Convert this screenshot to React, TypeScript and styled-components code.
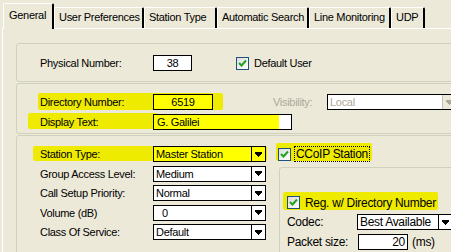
import React from 'react';
import styled, { createGlobalStyle } from 'styled-components';

const GlobalStyle = createGlobalStyle`
  body {
    margin: 0;
    background: #ece9d8;
    font-family: "Liberation Sans", Arial, sans-serif;
    font-size: 11px;
    letter-spacing: -0.3px;
    color: #000;
  }
`;

const Window = styled.div`
  width: 451px;
  height: 252px;
  overflow: hidden;
  padding-left: 2px;
  box-sizing: border-box;
`;

const TabStrip = styled.div`
  display: flex;
  align-items: flex-end;
  height: 28px;
  margin-left: 1px;
`;

const Tab = styled.div<{ active?: boolean; w: number }>`
  position: relative;
  box-sizing: border-box;
  width: ${(p) => p.w}px;
  height: ${(p) => (p.active ? '26px' : '21px')};
  margin-bottom: ${(p) => (p.active ? '-1px' : '0')};
  padding-left: ${(p) => (p.active ? 5 : 4)}px;
  border-top: 1px solid #fff;
  border-left: 1px solid #fff;
  border-right: 2px solid #000;
  border-top-left-radius: 2px;
  border-top-right-radius: 2px;
  background: #ece9d8;
  line-height: ${(p) => (p.active ? '22px' : '19px')};
  white-space: nowrap;
  z-index: ${(p) => (p.active ? 2 : 1)};
`;

const Page = styled.div`
  border-top: 1px solid #fff;
  border-left: 1px solid #fff;
  padding: 14px 0 0 13px;
`;

const Group = styled.div<{ gap?: number }>`
  position: relative;
  box-sizing: border-box;
  margin-right: -40px;
  margin-bottom: ${(p) => p.gap ?? 1}px;
  border: 1px solid #d0d0bf;
  border-radius: 3px;
  padding: 11px 0 0 23px;
`;

const Row = styled.div<{ h?: number }>`
  position: relative;
  display: flex;
  align-items: center;
  height: ${(p) => p.h ?? 16}px;
`;

const Stack = styled.div<{ gap: number; pb?: number }>`
  display: flex;
  flex-direction: column;
  gap: ${(p) => p.gap}px;
  padding-bottom: ${(p) => p.pb ?? 0}px;
`;

const Label = styled.span<{ w?: number; dim?: boolean }>`
  position: relative;
  width: ${(p) => (p.w ? `${p.w}px` : 'auto')};
  flex: none;
  color: ${(p) => (p.dim ? '#aca899' : '#000')};
  white-space: nowrap;
`;

const Marker = styled.span<{ l: number; t: number; w: number; h: number }>`
  position: absolute;
  left: ${(p) => p.l}px;
  top: ${(p) => p.t}px;
  width: ${(p) => p.w}px;
  height: ${(p) => p.h}px;
  background: #efeb00;
  border-radius: 2px;
`;

const TextBox = styled.div<{ w: number; align?: string; fill?: string }>`
  position: relative;
  box-sizing: border-box;
  width: ${(p) => p.w}px;
  height: 16px;
  flex: none;
  border: 1px solid #000;
  background: ${(p) => p.fill ?? '#fff'};
  text-align: ${(p) => p.align ?? 'left'};
  padding: 0 3px;
  line-height: 14px;
`;

const Combo = styled.div<{ w: number; fill?: string; disabled?: boolean }>`
  position: relative;
  box-sizing: border-box;
  display: flex;
  width: ${(p) => p.w}px;
  height: 16px;
  flex: none;
  border: 1px solid #000;
  background: ${(p) => p.fill ?? '#fff'};
  color: ${(p) => (p.disabled ? '#aca899' : '#000')};
  line-height: 14px;
`;

const ComboText = styled.span<{ indent?: number }>`
  flex: 1;
  padding-left: ${(p) => p.indent ?? 2}px;
  white-space: nowrap;
  overflow: hidden;
`;

const ComboButton = styled.span<{ disabled?: boolean }>`
  width: 13px;
  flex: none;
  display: flex;
  align-items: center;
  justify-content: center;
  border-left: 1px solid ${(p) => (p.disabled ? '#c0c0c0' : '#000')};
  background: ${(p) => (p.disabled ? '#ece9d8' : 'transparent')};
`;

const Check = styled.span`
  position: relative;
  box-sizing: border-box;
  width: 13px;
  height: 13px;
  flex: none;
  border: 1px solid #1c5180;
  background: linear-gradient(135deg, #dcdcd7, #fff);
  display: flex;
  align-items: center;
  justify-content: center;
`;

const CheckLabel = styled.span<{ focus?: boolean }>`
  position: relative;
  margin-left: 3px;
  padding: 0 1px;
  line-height: 14px;
  border: 1px dotted ${(p) => (p.focus ? '#000' : 'transparent')};
  white-space: nowrap;
`;

const Columns = styled.div`
  display: flex;
  align-items: flex-start;
`;

const RightCol = styled.div`
  margin-left: 12px;
  display: flex;
  flex-direction: column;
  font-size: 12px;
  letter-spacing: -0.3px;
`;

const InnerGroup = styled.div`
  box-sizing: border-box;
  margin: 5px 0 0 1px;
  width: 200px;
  height: 120px;
  border: 1px solid #d0d0bf;
  border-radius: 3px;
  padding: 26px 0 0 7px;
  display: flex;
  flex-direction: column;
`;

const Unit = styled.span`
  margin-left: 4px;
`;

const Arrow = ({ disabled }: { disabled?: boolean }) => (
  <svg width="7" height="5" viewBox="0 0 7 5">
    <path
      d="M0 0h7v2H0zM1 2h5v1H1zM2 3h3v1H2zM3 4h1v1H3z"
      fill={disabled ? '#aca899' : '#000'}
    />
  </svg>
);

const Tick = () => (
  <svg width="9" height="9" viewBox="0 0 9 9">
    <polyline points="1,4 3.5,6.5 8,1.5" fill="none" stroke="#21a121" strokeWidth="2" />
  </svg>
);

const Select = ({ w, value, fill, disabled, indent }: { w: number; value: string; fill?: string; disabled?: boolean; indent?: number }) => (
  <Combo w={w} fill={fill} disabled={disabled}>
    <ComboText indent={indent}>{value}</ComboText>
    <ComboButton disabled={disabled}>
      <Arrow disabled={disabled} />
    </ComboButton>
  </Combo>
);

const tabs = [
  { name: 'General', w: 51 },
  { name: 'User Preferences', w: 90 },
  { name: 'Station Type', w: 73 },
  { name: 'Automatic Search', w: 92 },
  { name: 'Line Monitoring', w: 82 },
  { name: 'UDP', w: 34 },
];

const stationRows = [
  { label: 'Group Access Level:', value: 'Medium' },
  { label: 'Call Setup Priority:', value: 'Normal' },
  { label: 'Volume (dB)', value: '0', indent: 8 },
  { label: 'Class Of Service:', value: 'Default' },
];

export default function App() {
  return (
    <Window>
      <GlobalStyle />
      <TabStrip>
        {tabs.map((t, i) => (
          <Tab key={t.name} w={t.w} active={i === 0}>
            {t.name}
          </Tab>
        ))}
      </TabStrip>
      <Page>
        <Group gap={1} style={{ height: 39 }}>
          <Row>
            <Label w={113}>Physical Number:</Label>
            <TextBox w={39} align="center">38</TextBox>
            <Check style={{ marginLeft: 44 }}>
              <Tick />
            </Check>
            <CheckLabel>Default User</CheckLabel>
          </Row>
        </Group>

        <Group gap={1} style={{ height: 51, paddingTop: 10 }}>
          <Stack gap={4}>
            <Row>
              <Marker l={-2} t={-1} w={185} h={17} />
              <Label w={113}>Directory Number:</Label>
              <TextBox w={60} align="center" fill="#ffff00">6519</TextBox>
              <Label dim style={{ marginLeft: 60 }} w={54}>Visibility:</Label>
              <Select w={130} value="Local" disabled />
            </Row>
            <Row>
              <Marker l={-12} t={-1} w={130} h={16} />
              <Label w={113}>Display Text:</Label>
              <TextBox w={139} fill="linear-gradient(to right, #ffff00 125px, #fff 125px)">
                G. Galilei
              </TextBox>
            </Row>
          </Stack>
        </Group>

        <Group style={{ height: 140, paddingTop: 10 }}>
          <Columns>
            <Stack gap={3.5}>
              <Row>
                <Marker l={-7} t={0} w={234} h={15} />
                <Label w={113}>Station Type:</Label>
                <Select w={113} value="Master Station" fill="#ffff00" />
              </Row>
              {stationRows.map((r) => (
                <Row key={r.label}>
                  <Label w={113}>{r.label}</Label>
                  <Select w={113} value={r.value} indent={r.indent} />
                </Row>
              ))}
            </Stack>
            <RightCol>
              <Row>
                <Marker l={-2} t={-3} w={96} h={18} />
                <Check>
                  <Tick />
                </Check>
                <CheckLabel focus>CCoIP Station</CheckLabel>
              </Row>
              <InnerGroup>
                <Stack gap={3}>
                  <Row h={17}>
                    <Marker l={-4} t={-2} w={155} h={18} />
                    <Check>
                      <Tick />
                    </Check>
                    <CheckLabel>Reg. w/ Directory Number</CheckLabel>
                  </Row>
                  <Row>
                    <Label w={70}>Codec:</Label>
                    <Select w={96} value="Best Available" />
                  </Row>
                  <Row h={17}>
                    <Label w={71}>Packet size:</Label>
                    <TextBox w={50} align="right" style={{ paddingRight: 2 }}>20</TextBox>
                    <Unit>(ms)</Unit>
                  </Row>
                </Stack>
              </InnerGroup>
            </RightCol>
          </Columns>
        </Group>
      </Page>
    </Window>
  );
}
